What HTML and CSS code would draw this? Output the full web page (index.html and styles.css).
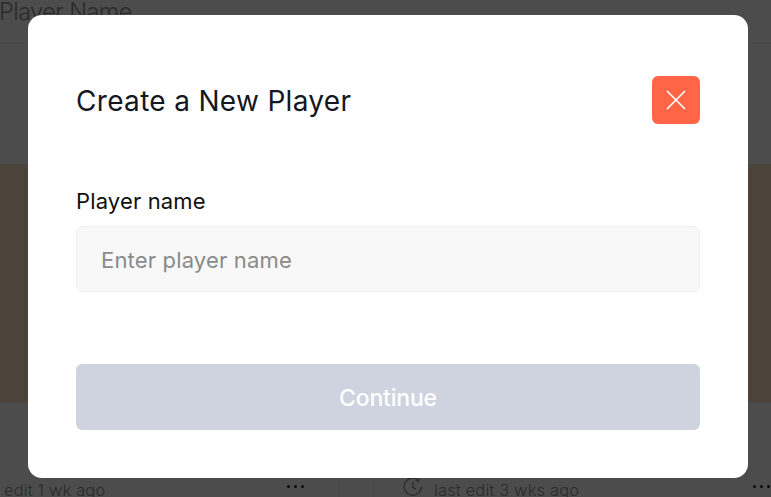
FILE: index.html
```html
<!DOCTYPE html>
<html lang="en">
<head>
<meta charset="utf-8">
<title>Create a New Player</title>
<link rel="stylesheet" href="styles.css">
</head>
<body>
<div class="page">
  <header class="page-head"><span class="page-title">Player Name</span></header>
  <div class="gap-band"></div>
  <div class="hero"></div>
  <div class="cards">
    <div class="card card-left">
      <span class="meta meta-left">edit 1 wk ago</span>
      <span class="dots dots-left"><i></i><i></i><i></i></span>
    </div>
    <div class="card card-right">
      <svg class="clock" viewBox="0 0 20 20" width="20" height="20" aria-hidden="true"><path d="M15.5 3.2A8.6 8.6 0 1 0 18.4 10M15.8 0.8v3h-3M10 5v5.4l3 1.8"/></svg>
      <span class="meta">last edit 3 wks ago</span>
      <span class="dots dots-right"><i></i><i></i><i></i></span>
    </div>
  </div>
</div>
<div class="overlay"></div>
<section class="modal">
  <div class="modal-head">
    <h2 class="modal-title">Create a New Player</h2>
    <button class="close" type="button" aria-label="Close">
      <svg viewBox="0 0 20 20" width="20" height="20" aria-hidden="true"><path d="M1 1l18 18M19 1L1 19"/></svg>
    </button>
  </div>
  <label class="field-label" for="player">Player name</label>
  <input class="field-input" id="player" type="text" placeholder="Enter player name">
  <button class="continue" type="button">Continue</button>
</section>
</body>
</html>
```

FILE: styles.css
```css
* { box-sizing: border-box; }
html, body { margin: 0; height: 100%; overflow: hidden; }
body { background: #fff; font-family: "Inter", "Liberation Sans", sans-serif; color: #1a1a1a; }

.page { height: 497px; display: flex; flex-direction: column; }
.page-head { height: 44px; border-bottom: 1px solid #ececec; overflow: hidden; }
.page-title { display: block; font-size: 23.5px; line-height: 26px; margin: -1px 0 0 -1px; color: #8f8f8f; font-weight: 300; letter-spacing: -0.55px; }
.gap-band { height: 120px; }
.hero { height: 239px; background: #ffe4c4; }
.cards { flex: 1; display: flex; }
.card { display: flex; align-items: flex-end; font-size: 16.5px; }
.card-left { width: 340px; border-right: 1px solid #eee; margin-right: 33px; }
.card-right { flex: 1; border-left: 1px solid #eee; padding-left: 29px; }
.meta { color: #8f8f8f; line-height: 20px; margin-bottom: -3px; font-weight: 300; letter-spacing: 0.13px; }
.meta-left { margin-left: 4px; }
.clock { fill: none; stroke: #8f8f8f; stroke-width: 1.3; margin-right: 11px; margin-bottom: 0; }
.dots { display: flex; gap: 4px; margin-left: auto; margin-bottom: 9px; }
.dots i { display: block; width: 3px; height: 3px; border-radius: 50%; background: #222; }
.dots-left { margin-right: 35px; }
.dots-right { margin-right: 1px; }

.overlay { position: fixed; inset: 0; background: rgba(0, 0, 0, 0.7); }

.modal {
  position: fixed;
  left: 28px; top: 15px;
  width: 720px; height: 463px;
  background: #fff;
  border-radius: 14px;
  padding: 61px 48px 48px;
  display: flex;
  flex-direction: column;
}
.modal-head { display: flex; align-items: center; justify-content: space-between; height: 48px; }
.modal-title { margin: 2px 0 0; font-size: 28px; font-weight: 400; color: #14171f; letter-spacing: 0.32px; }
.close {
  width: 48px; height: 48px; padding: 0; border: 0; border-radius: 6px;
  background: #ff6647; display: flex; align-items: center; justify-content: center;
}
.close svg { fill: none; stroke: #fff; stroke-width: 1.6; }
.field-label { margin-top: 63px; font-size: 22px; line-height: 28px; color: #111; font-weight: 400; letter-spacing: 0.15px; }
.field-input {
  margin-top: 11px; height: 66px; padding: 2px 24px 0;
  background: #f8f8f8; border: 1px solid #f0f0f0; border-radius: 6px;
  font: 400 22px "Inter", "Liberation Sans", sans-serif; letter-spacing: 0.17px;
}
.field-input::placeholder { color: #8a8a8a; opacity: 1; }
.continue {
  margin-top: auto; height: 66px; padding: 2px 0 0; border: 0; border-radius: 6px;
  background: #ced3df; color: #fff;
  font: 500 23px "Inter", "Liberation Sans", sans-serif; letter-spacing: -0.2px;
}
```
